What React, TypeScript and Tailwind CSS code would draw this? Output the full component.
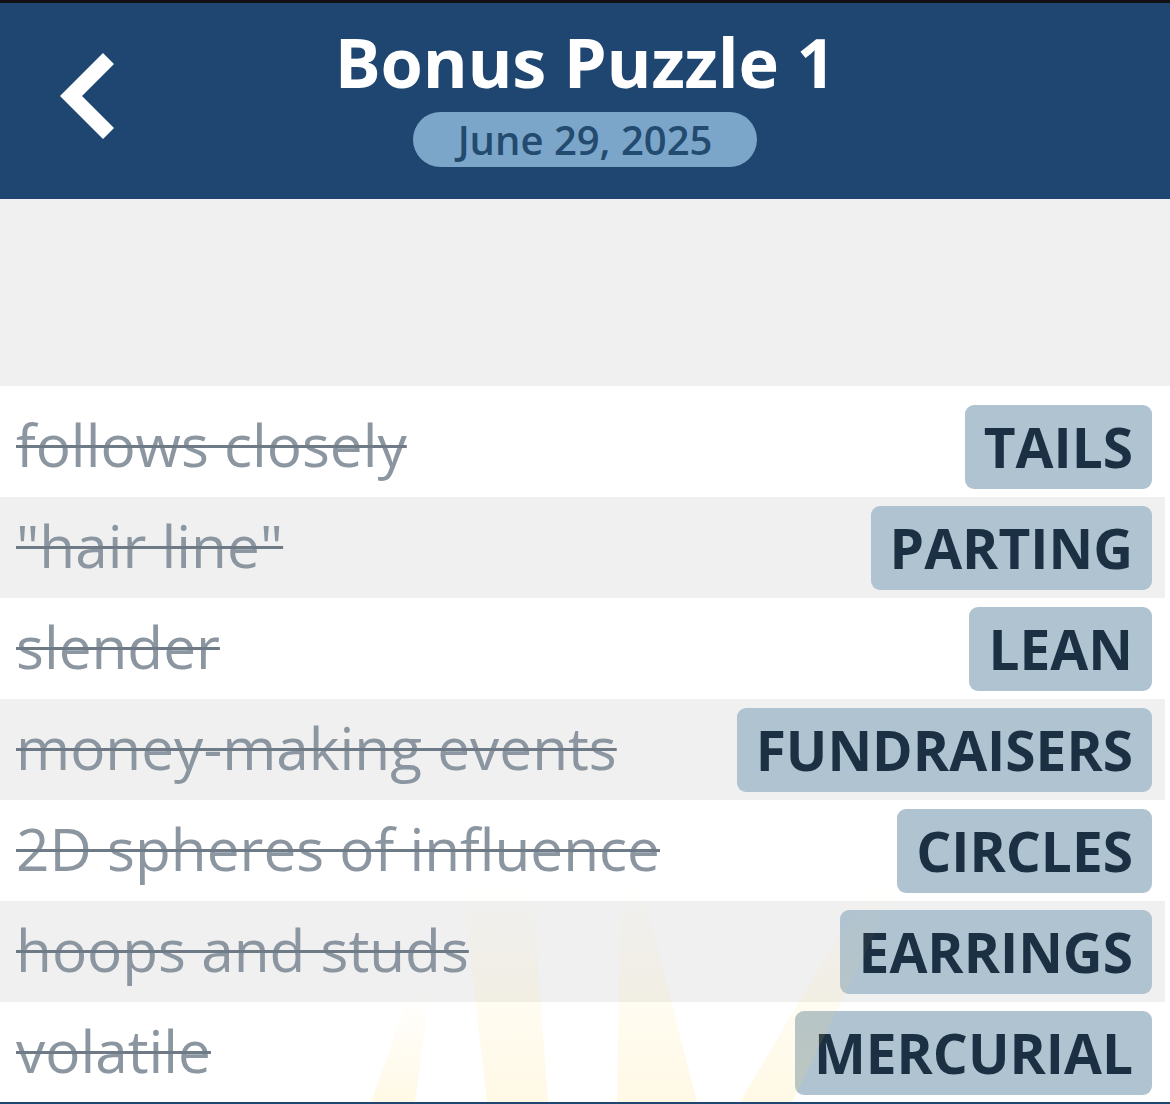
import React from "react";

const rows: { clue: string; answer: string }[] = [
  { clue: "follows closely", answer: "TAILS" },
  { clue: "\"hair line\"", answer: "PARTING" },
  { clue: "slender", answer: "LEAN" },
  { clue: "money-making events", answer: "FUNDRAISERS" },
  { clue: "2D spheres of influence", answer: "CIRCLES" },
  { clue: "hoops and studs", answer: "EARRINGS" },
  { clue: "volatile", answer: "MERCURIAL" },
];

export default function App() {
  return (
    <div className="relative w-[1170px] h-[1104px] overflow-hidden bg-white font-['Open_Sans',sans-serif]">
      <div className="h-[3px] bg-[#111111]" />
      <header className="relative h-[196px] bg-[#1e4670] flex flex-col items-center">
        <svg className="absolute left-0 top-0" width="130" height="150" viewBox="0 0 130 150">
          <polygon points="103,47 114,58 82,90 114,122 103,133 60,90" fill="white" transform="translate(0,3)" />
        </svg>
        <h1 className="mt-[18px] text-[68.5px] leading-[82px] font-bold text-white tracking-[-0.2px]">Bonus Puzzle 1</h1>
        <div className="mt-[9px] h-[55px] w-[344px] rounded-full bg-[#7ba6c9] flex items-center justify-center">
          <span className="text-[40px] font-semibold text-[#234a6f] leading-none">June 29, 2025</span>
        </div>
      </header>
      <div className="h-[187px] bg-[#f0f0f0]" />
      <div className="relative flex flex-col">
        {rows.map((r, i) => (
          <div
            key={r.clue}
            className={
              (i % 2 === 0 ? "bg-white pr-[18px] " : "bg-[#f0f0f0] mr-[5px] pr-[13px] ") +
              (i === 0 ? "h-[111px] pt-[10px] " : "h-[101px] ") +
              "flex items-center justify-between pl-[16px]"
            }
          >
            <span className="text-[58.5px] leading-none text-[#8b96a1] line-through decoration-[#6e7b87] decoration-[3px] whitespace-nowrap -translate-y-[2px]">
              {r.clue}
            </span>
            <span className="h-[84px] px-[19px] rounded-[9px] bg-[#b0c3d1] flex items-center text-[55px] font-bold text-[#1c3043] leading-none">
              {r.answer}
            </span>
          </div>
        ))}
      </div>
      <svg className="absolute left-0 bottom-[2px] pointer-events-none" width="1170" height="230" viewBox="0 0 1170 230">
        <defs>
          <linearGradient id="ray" x1="0" y1="1" x2="0" y2="0">
            <stop offset="0" stopColor="#ffd860" stopOpacity="0.16" />
            <stop offset="1" stopColor="#ffd860" stopOpacity="0" />
          </linearGradient>
        </defs>
        <polygon points="487,230 548,230 532,10 462,10" fill="url(#ray)" />
        <polygon points="617,230 697,230 641,10 620,10" fill="url(#ray)" />
        <polygon points="740,230 792,230 900,10 870,10" fill="url(#ray)" />
        <polygon points="371,230 415,230 430,120 410,120" fill="url(#ray)" />
      </svg>
      <div className="absolute left-0 right-0 bottom-0 h-[2px] bg-[#1e4670]" />
    </div>
  );
}
